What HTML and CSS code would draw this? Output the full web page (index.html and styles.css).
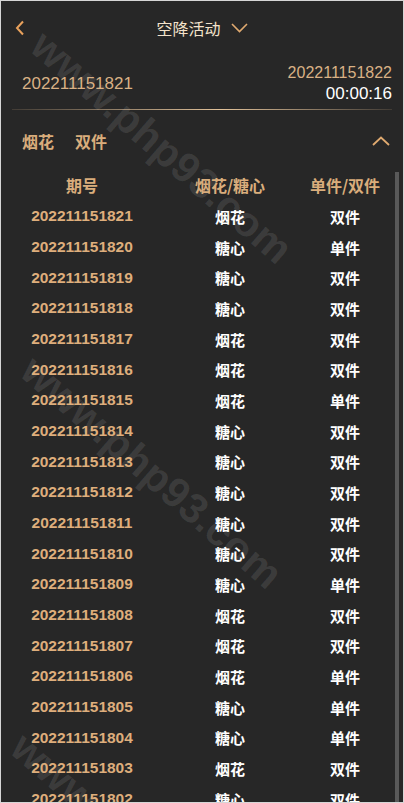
FILE: index.html
```html
<!DOCTYPE html>
<html>
<head>
  <meta charset="UTF-8">
  <title>空降活动</title>
  <link rel="stylesheet" href="styles.css">
</head>
<body>
  <div class="app">
    <div class="watermark wm-1">www.php93.com</div>
    <div class="watermark wm-2">www.php93.com</div>
    <div class="watermark wm-3">www.php93.com</div>

    <div class="topbar">
      <span class="back">
        <svg width="12" height="16" viewBox="0 0 12 16"><polyline points="9,1.5 3,8 9,14.5" fill="none" stroke="#e8a15c" stroke-width="2"/></svg>
      </span>
      <div class="title">空降活动
        <svg width="17" height="10" viewBox="0 0 17 10"><polyline points="1,1 8.5,8.5 16,1" fill="none" stroke="#e0aa70" stroke-width="1.6"/></svg>
      </div>
      <span></span>
    </div>

    <div class="draw">
      <div class="draw-current">202211151821</div>
      <div class="draw-next">
        <div class="next-no">202211151822</div>
        <div class="countdown">00:00:16</div>
      </div>
    </div>
    <div class="divider"></div>

    <div class="section-head">
      <div class="picks"><span>烟花</span><span>双件</span></div>
      <svg width="18" height="10" viewBox="0 0 18 10"><polyline points="1,9 9,1.5 17,9" fill="none" stroke="#e0aa70" stroke-width="1.8"/></svg>
    </div>

    <div class="history">
      <div class="row head">
        <span>期号</span><span>烟花/糖心</span><span>单件/双件</span>
      </div>
      <div id="rows"></div>
    </div>

    <div class="scroll-thumb"></div>
  </div>

  <script>
    // history of draws: [period suffix, type, pair]
    const draws = [
      ['21', '烟花', '双件'], ['20', '糖心', '单件'], ['19', '糖心', '双件'],
      ['18', '糖心', '双件'], ['17', '烟花', '双件'], ['16', '烟花', '双件'],
      ['15', '烟花', '单件'], ['14', '糖心', '双件'], ['13', '糖心', '双件'],
      ['12', '糖心', '双件'], ['11', '糖心', '双件'], ['10', '糖心', '双件'],
      ['09', '糖心', '单件'], ['08', '烟花', '双件'], ['07', '烟花', '双件'],
      ['06', '烟花', '单件'], ['05', '糖心', '单件'], ['04', '糖心', '单件'],
      ['03', '烟花', '双件'], ['02', '糖心', '双件']
    ];

    const rows = document.getElementById('rows');
    draws.forEach(d => {
      const row = document.createElement('div');
      row.className = 'row';
      row.innerHTML = '<span class="no">2022111518' + d[0] + '</span><span>' + d[1] + '</span><span>' + d[2] + '</span>';
      rows.appendChild(row);
    });
  </script>
</body>
</html>
```

FILE: styles.css
```css
html, body {
  margin: 0;
  padding: 0;
}
body {
  font-family: "Liberation Sans", Arial, "Noto Sans CJK SC", sans-serif;
  background-color: #272727;
}
.app {
  position: relative;
  width: 404px;
  height: 803px;
  box-sizing: border-box;
  border: 1px solid #d6d6d6;
  background-color: #272727;
  overflow: hidden;
}
.topbar,
.draw,
.divider,
.section-head,
.history {
  position: relative;
}
.topbar {
  display: grid;
  grid-template-columns: 1fr auto 1fr;
  align-items: center;
  height: 53px;
}
.back {
  display: flex;
  padding-left: 13px;
}
.title {
  display: flex;
  align-items: center;
  gap: 10px;
  font-size: 16px;
  color: #f4e3cb;
  font-family: "Noto Sans CJK SC", sans-serif;
}
.draw {
  display: flex;
  justify-content: space-between;
  align-items: center;
  padding: 8px 11px 5px 21px;
  color: #d9b185;
}
.draw-current {
  font-size: 17px;
  padding-top: 2px;
}
.draw-next {
  text-align: right;
  line-height: 21px;
}
.next-no {
  font-size: 16px;
}
.countdown {
  font-size: 17px;
  color: #fff;
}
.divider {
  height: 1px;
  margin: 0 11px;
  background: linear-gradient(to right, rgba(217, 177, 133, 0.15), #e2c29a 55%, rgba(217, 177, 133, 0.15));
}
.section-head {
  display: flex;
  justify-content: space-between;
  align-items: center;
  height: 62px;
  padding: 0 13px 0 21px;
}
.picks {
  display: flex;
  gap: 21px;
  font-size: 16px;
  font-weight: bold;
  color: #d9ad7c;
  font-family: "Noto Sans CJK SC", sans-serif;
}
.history {
  padding-left: 11px;
}
.row {
  display: grid;
  grid-template-columns: 140px 156px 74px;
  align-items: center;
  height: 30.68px;
  font-size: 15px;
  font-weight: bold;
  color: #fff;
  text-align: center;
}
.row span {
  font-family: "Noto Sans CJK SC", sans-serif;
}
.row .no {
  font-family: "Liberation Sans", Arial, sans-serif;
  font-size: 15.5px;
  color: #deae7c;
}
.row.head {
  height: 26px;
  margin-bottom: 3px;
  font-size: 16px;
  color: #d9ad7c;
}
.scroll-thumb {
  position: absolute;
  left: 394px;
  top: 171px;
  width: 4px;
  bottom: 0;
  background-color: #595959;
}
.watermark {
  position: absolute;
  font-family: "Liberation Sans", Arial, sans-serif;
  font-size: 42px;
  font-weight: bold;
  color: rgba(255, 255, 255, 0.1);
  white-space: nowrap;
  transform-origin: 0 0;
  transform: rotate(41deg);
  pointer-events: none;
}
.wm-1 {
  left: 52px;
  top: 20px;
}
.wm-2 {
  left: 42px;
  top: 345px;
}
.wm-3 {
  left: 32px;
  top: 722px;
}
```
